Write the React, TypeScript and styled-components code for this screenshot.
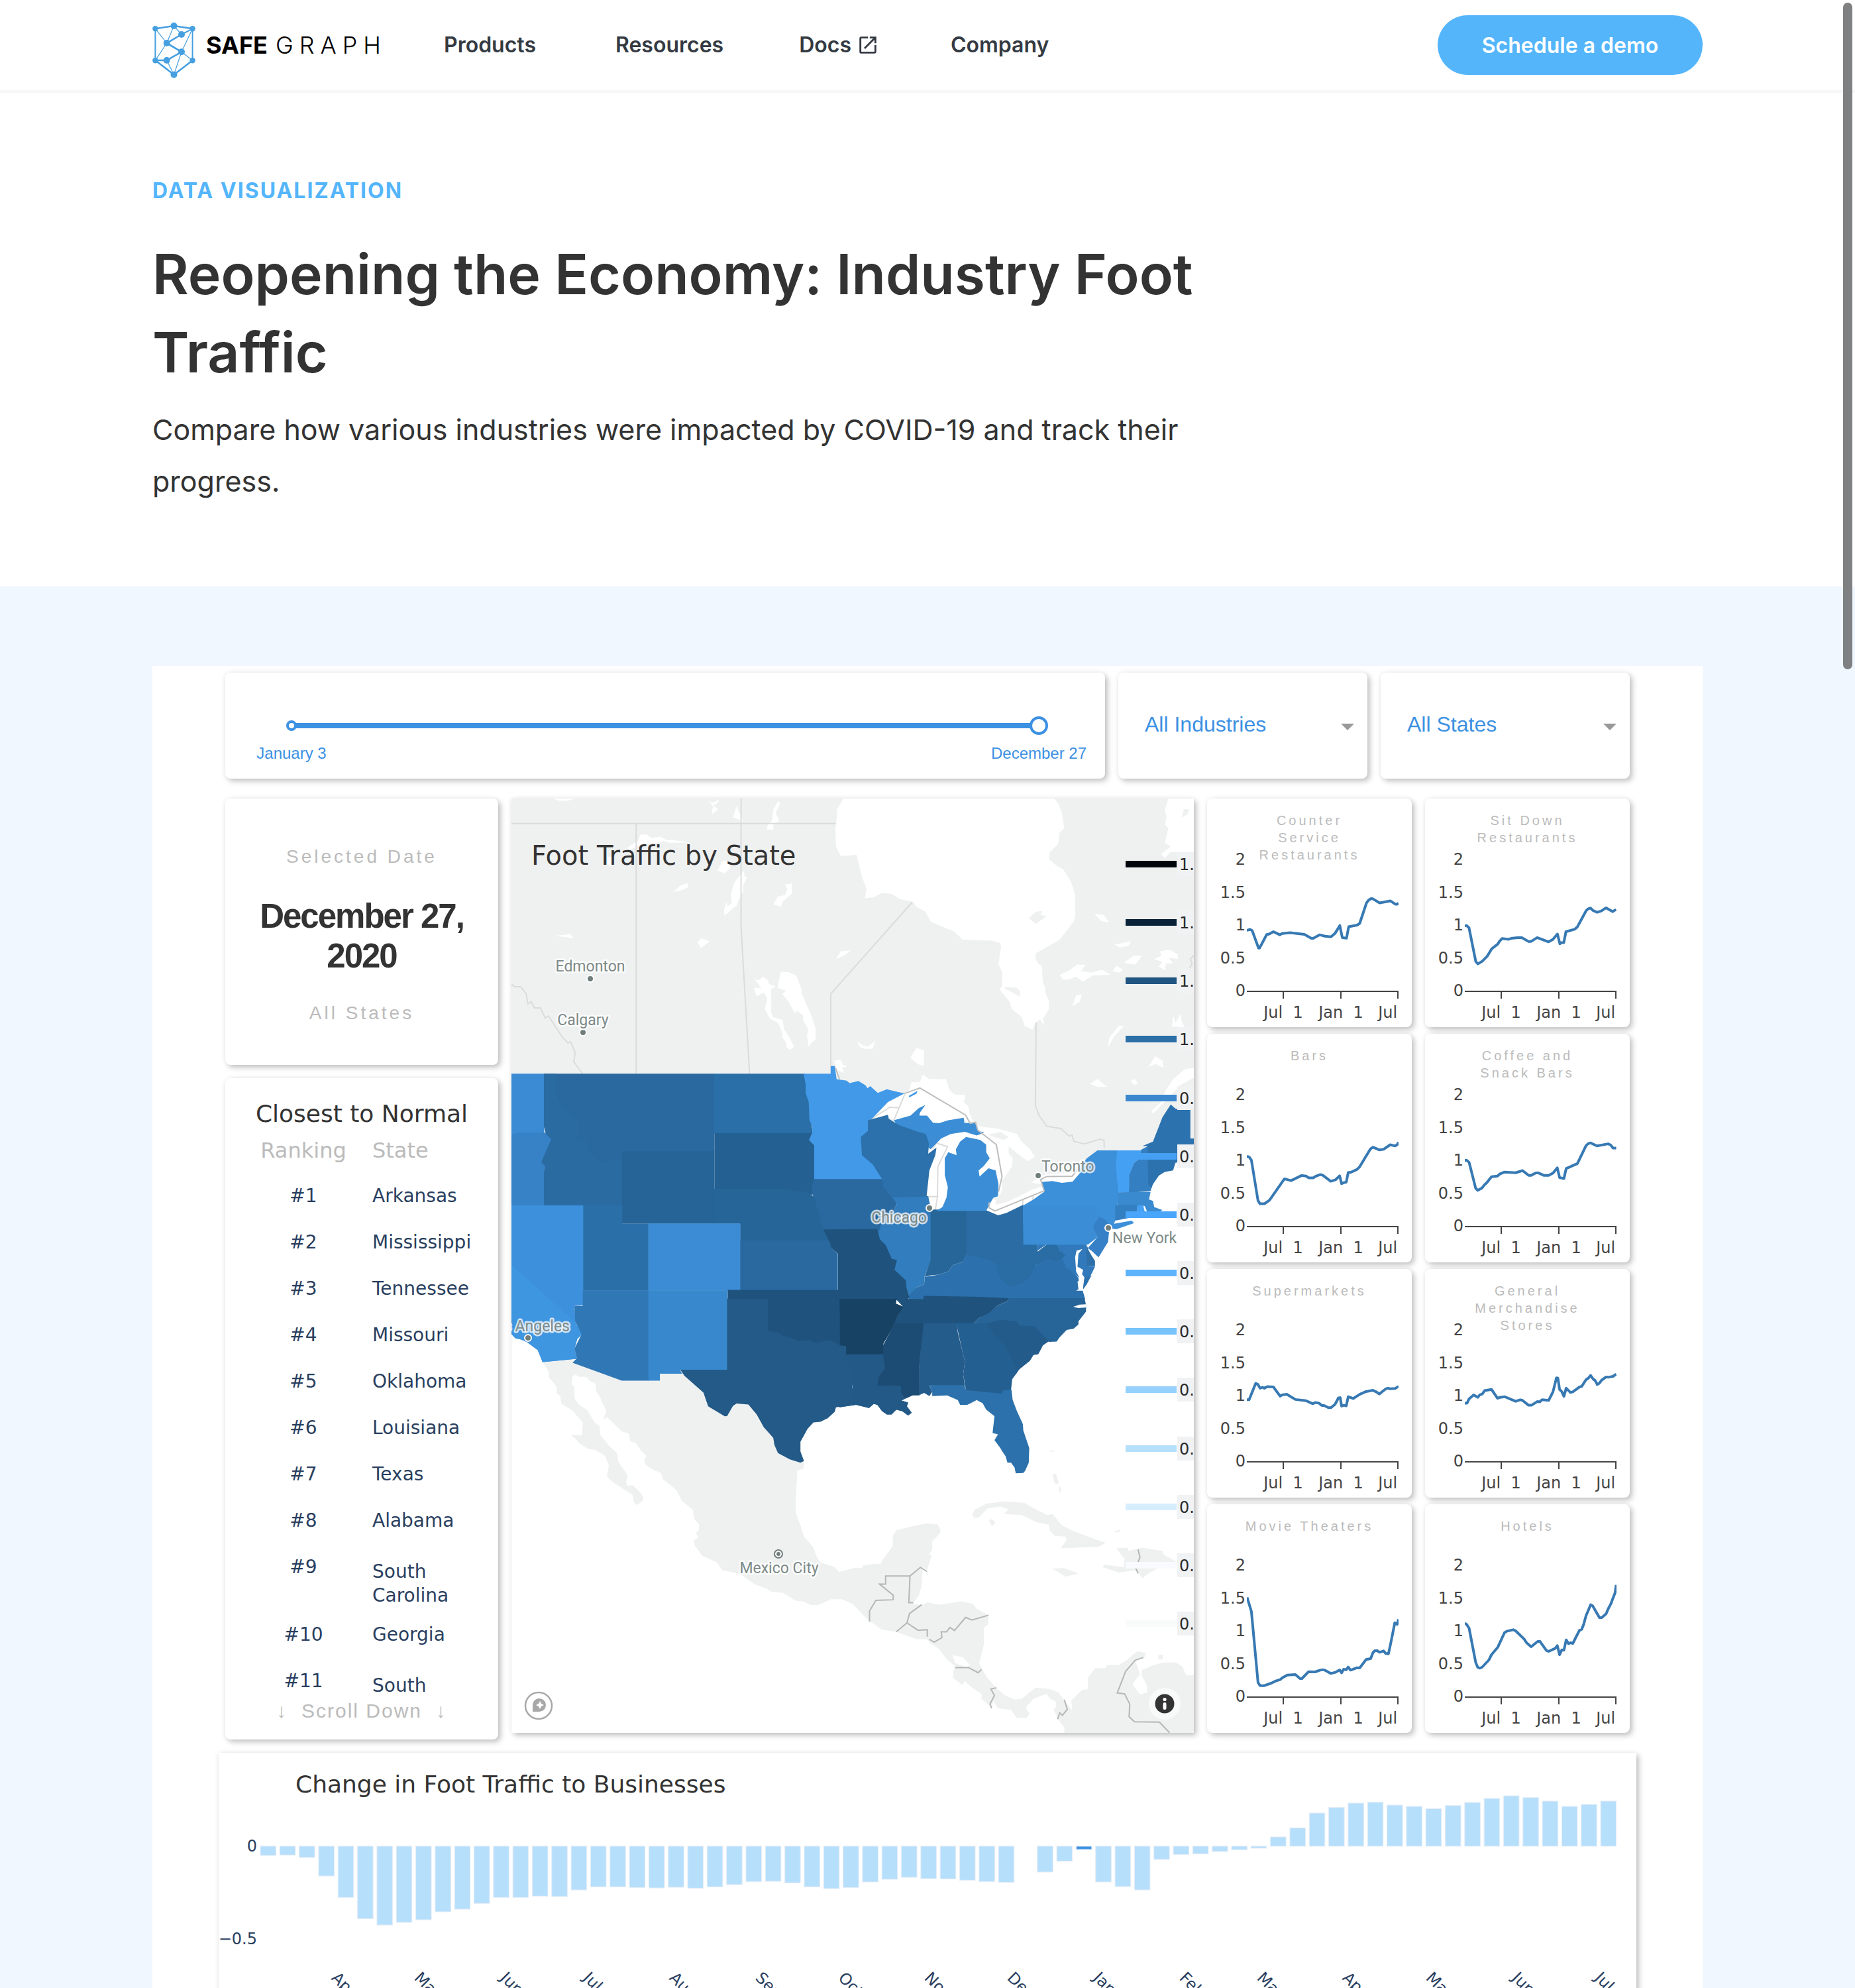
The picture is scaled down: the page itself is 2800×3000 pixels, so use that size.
import React from "react";
import styled, { createGlobalStyle } from "styled-components";
import { MdOpenInNew } from "react-icons/md";

const brand = '"Inter", "Roboto", sans-serif';
const arial = '"Liberation Sans", Arial, sans-serif';
const verdana = 'Verdana, "DejaVu Sans", sans-serif';

const GlobalStyle = createGlobalStyle`
  *, *::before, *::after { box-sizing: border-box; }
  body { margin: 0; background: #fff; color: #333; font-family: ${brand}; }
`;

const Page = styled.div`
  position: relative;
  height: 100vh;
  overflow: hidden;
`;

const ScrollThumb = styled.div`
  position: absolute;
  top: 4px;
  right: 4px;
  width: 14px;
  height: 1006px;
  border-radius: 7px;
  background: #7f8082;
`;

const Container = styled.div`
  max-width: 2340px;
  margin: 0 auto;
`;

/* ---------- header ---------- */

const Header = styled.header`
  border-bottom: 4px solid #f7f7f7;
`;

const HeaderRow = styled(Container)`
  display: flex;
  align-items: center;
  height: 136px;
`;

const Brand = styled.a`
  display: flex;
  align-items: center;
  gap: 16px;
  margin-right: 80px;
  color: #000;
  text-decoration: none;
`;

const Mark = styled.svg`
  width: 65px;
  height: 84px;
  margin-top: 16px;
`;

const Wordmark = styled.span`
  display: flex;
  gap: 12px;
  font-size: 36px;
  font-weight: 300;
  line-height: 44px;
  letter-spacing: 9px;
`;

const WordStrong = styled.b`
  font-weight: 700;
  letter-spacing: 0;
`;

const Nav = styled.nav`
  display: flex;
  flex: 1;
  gap: 108px;
`;

const NavLink = styled.a<{ $menu?: boolean }>`
  display: flex;
  align-items: center;
  gap: 8px;
  padding: 0 ${(p) => (p.$menu ? "6px" : "0")};
  color: #343a42;
  font-size: 32px;
  font-weight: 600;
  line-height: 44px;
  text-decoration: none;
`;

const DemoButton = styled.button`
  width: 400px;
  height: 90px;
  border: 0;
  border-radius: 45px;
  background: #54b5fb;
  color: #fff;
  font-family: inherit;
  font-size: 32px;
  font-weight: 600;
`;

/* ---------- hero ---------- */

const Hero = styled(Container)`
  padding: 128px 0 120px;
`;

const Eyebrow = styled.p`
  margin: 0;
  color: #54b5fb;
  font-size: 32px;
  font-weight: 700;
  line-height: 40px;
  letter-spacing: 2px;
`;

const Title = styled.h1`
  max-width: 1680px;
  margin: 47px 0 0;
  font-size: 84px;
  font-weight: 600;
  line-height: 118px;
`;

const Lead = styled.p`
  max-width: 1640px;
  margin: 18px 0 0;
  font-size: 43px;
  line-height: 78px;
`;

/* ---------- dashboard ---------- */

const Band = styled.section`
  padding-top: 120px;
  background: #f0f7ff;
`;

const Panel = styled(Container)`
  padding: 10px 100px 0;
  background: #fff;
`;

const Inner = styled.div`
  padding: 0 10px;
`;

const Card = styled.section`
  border-radius: 8px;
  background: #fff;
  box-shadow: 4px 4px 8px rgba(0, 0, 0, 0.22), 0 0 8px rgba(0, 0, 0, 0.07);
`;

const Toolbar = styled.div`
  display: grid;
  grid-template-columns: 1328fr 376fr 376fr;
  gap: 20px;
  margin-bottom: 30px;
`;

const SliderCard = styled(Card)`
  height: 160px;
  padding: 66px 86px 0;
`;

const SliderTrack = styled.div`
  position: relative;
  display: flex;
`;

const StartHandle = styled.span`
  position: absolute;
  left: 6px;
  top: 6px;
  width: 16px;
  height: 16px;
  border: 4px solid #3c91e3;
  border-radius: 50%;
  background: #fff;
`;

const Range = styled.input`
  width: 100%;
  height: 28px;
  margin: 0;
  appearance: none;
  background: linear-gradient(#3c91e3, #3c91e3) center / calc(100% - 28px) 8px no-repeat;

  &::-webkit-slider-thumb {
    appearance: none;
    width: 28px;
    height: 28px;
    border: 4px solid #3c91e3;
    border-radius: 50%;
    background: #fff;
  }
`;

const SliderLabels = styled.div`
  display: flex;
  justify-content: space-between;
  margin: 14px -60px 0;
  color: #3c91e3;
  font: 24px/28px ${arial};
`;

const SliderLabel = styled.label`
  width: 148px;
  text-align: center;
`;

const SelectCard = styled(Card)`
  display: flex;
  align-items: center;
  padding: 0 20px 0 40px;
`;

const Select = styled.select`
  flex: 1;
  width: 100%;
  height: 56px;
  margin-bottom: 4px;
  padding: 0;
  border: 0;
  appearance: none;
  background: none;
  color: #3c91e3;
  font: 32px/40px ${arial};
`;

const Caret = styled.span`
  border: 10px solid transparent;
  border-top-color: #999;
  border-bottom: 0;
  margin-top: 4px;
`;

const Board = styled.div`
  display: grid;
  grid-template-columns: minmax(0, 412fr) minmax(0, 1030fr) minmax(0, 638fr);
  gap: 20px;
  align-items: start;
`;

const Side = styled.div`
  display: flex;
  flex-direction: column;
  gap: 20px;
`;

const DateCard = styled(Card)`
  padding: 68px 30px 58px;
  text-align: center;
  font-family: ${arial};
`;

const Muted = styled.p`
  margin: 0;
  color: #bbb;
  font-size: 28px;
  line-height: 40px;
  letter-spacing: 4px;
`;

const BigDate = styled.p`
  margin: 40px 0 36px;
  font-size: 51px;
  font-weight: 700;
  line-height: 60px;
  letter-spacing: -2px;
`;

const RankCard = styled(Card)`
  display: flex;
  flex-direction: column;
  height: 998px;
  padding: 26px 32px 23px;
  font-family: ${verdana};
`;

const RankTitle = styled.h2`
  margin: 0;
  font-size: 36px;
  font-weight: 400;
  line-height: 56px;
  text-align: center;
  white-space: nowrap;
`;

const RankList = styled.div`
  flex: 1;
  min-height: 0;
  overflow: hidden;
`;

const RankTable = styled.table`
  width: 100%;
  table-layout: fixed;
  border-collapse: collapse;
  color: #2a3f5f;
  font-size: 28px;
`;

const HeadCell = styled.th<{ $wide?: boolean }>`
  width: ${(p) => (p.$wide ? "auto" : "172px")};
  padding: 0 0 7px ${(p) => (p.$wide ? "18px" : "0")};
  color: #bbb;
  font-size: 32px;
  font-weight: 400;
  line-height: 54px;
  text-align: ${(p) => (p.$wide ? "left" : "center")};
`;

const RankCell = styled.td`
  padding: 0;
  line-height: 70px;
  text-align: center;
  vertical-align: top;
`;

const StateCell = styled.td<{ $wrap: boolean }>`
  padding: ${(p) => (p.$wrap ? "24px 0 6px 18px" : "0 0 0 18px")};
  line-height: ${(p) => (p.$wrap ? "36px" : "70px")};
`;

const ScrollHint = styled.p`
  margin: 0;
  color: #bbb;
  font: 30px/40px ${arial};
  letter-spacing: 2px;
  text-align: center;
  white-space: nowrap;
`;

const MapCard = styled(Card)`
  border-radius: 0;
`;

const MapSvg = styled.svg`
  display: block;
  width: 100%;
  aspect-ratio: 1030 / 1410;
`;

const MapTitle = styled.text`
  fill: #333;
  font: 40px ${verdana};
`;

const City = styled.text`
  fill: #7d8a88;
  stroke: rgba(255, 255, 255, 0.75);
  stroke-width: 5px;
  stroke-linejoin: round;
  paint-order: stroke;
  font: 23px "Roboto", sans-serif;
`;

const LegendText = styled.text`
  fill: #2a2a2a;
  font: 24px ${verdana};
`;

const MiniGrid = styled.div`
  display: grid;
  grid-template-columns: 1fr 1fr;
  gap: 10px 20px;
`;

const MiniCard = styled(Card)`
  display: grid;
  & > * { grid-area: 1 / 1; }
`;

const MiniTitle = styled.h3`
  margin: 20px 55px 0;
  color: #bbb;
  font: 20px/26px ${arial};
  letter-spacing: 4px;
  text-align: center;
`;

const ChartSvg = styled.svg`
  display: block;
  width: 100%;
  overflow: visible;
`;

const Tick = styled.text<{ $navy?: boolean }>`
  fill: ${(p) => (p.$navy ? "#2a3f5f" : "#444")};
  font: 24px ${verdana};
`;

const BarCard = styled(Card)`
  margin-top: 20px;
  padding-top: 26px;
  border-radius: 0;
`;

const BarTitle = styled.h2`
  margin: 0 0 4px 116px;
  font: 36px/44px ${verdana};
`;

/* ---------- data ---------- */

const nodes: [number, number, number][] = [
  [32.5, 5, 5], [4.4, 9.3, 4.2], [60.6, 9.3, 4.2], [44, 18, 5], [21.7, 31, 5],
  [44, 44.3, 5], [21.7, 57, 5], [4.4, 57.3, 4.2], [60.6, 57.3, 4.2], [32.5, 78.7, 5],
];
const thick = "M4.4 9.3L32.5 5L60.6 9.3M44 18L21.7 31L44 44.3L21.7 57H4.4L32.5 78.7L60.6 57.3";
const medium = "M4.4 9.3V57.3M60.6 9.3V57.3M60.6 9.3L44 18";
const thin = "M4.4 9.3L21.7 31M32.5 5L44 18M32.5 5L21.7 31M21.7 31L4.4 57.3M60.6 9.3L44 44.3L60.6 57.3M44 44.3L32.5 78.7L21.7 57";

const ranking = ["Arkansas", "Mississippi", "Tennessee", "Missouri", "Oklahoma", "Louisiana", "Texas", "Alabama", "South Carolina", "Georgia", "South Dakota"];

type Series = { name: string; x: number; y: number; sx: number; sy: number; line: string };

const series: Series[] = [
  { name: "Counter Service Restaurants", x: 414, y: 1388, sx: 1.8667, sy: 2.8, line: "414,1131 423,1126 429,1131 447,1205 450,1205 470,1148 477,1146 489,1136 507,1149 513,1144 536,1140 576,1147 596,1164 601,1164 619,1149 634,1155 651,1158 663,1142 676,1110 683,1161 695,1163 701,1115 725,1108 732,1101 751,1015 757,1003 764,996 769,997 788,1014 819,1006 833,1020 838,1020 841,1014" },
  { name: "Sit Down Restaurants", x: 1029, y: 1388, sx: 1.8667, sy: 2.8, line: "1029,1110 1035,1111 1041,1120 1060,1262 1066,1272 1078,1261 1092,1240 1105,1208 1122,1188 1127,1176 1134,1165 1153,1168 1160,1164 1178,1161 1190,1161 1208,1177 1216,1177 1233,1161 1265,1179 1277,1169 1290,1146 1297,1187 1301,1182 1308,1182 1314,1136 1338,1126 1346,1116 1371,1047 1377,1039 1383,1036 1390,1046 1402,1054 1414,1048 1427,1035 1446,1051 1455,1042" },
  { name: "Bars", x: 189, y: 655, sx: 2.306, sy: 2.1778, line: "189,424 197,426 205,437 228,570 235,580 250,580 268,568 320,498 343,504 380,487 395,489 405,495 420,495 430,489 445,484 453,486 481,506 498,501 512,488 519,514 528,510 535,509 542,477 550,477 573,467 582,458 619,400 628,394 651,403 665,401 688,386 705,390 712,386 717,378" },
  { name: "Coffee and Snack Bars", x: 948, y: 655, sx: 2.306, sy: 2.1778, line: "948,437 955,437 963,444 986,529 993,536 1008,528 1016,518 1025,510 1041,491 1062,489 1070,482 1085,476 1125,478 1149,471 1171,487 1179,487 1194,479 1203,478 1224,487 1240,487 1255,479 1270,462 1278,494 1293,497 1301,464 1340,448 1370,389 1378,382 1386,380 1408,390 1447,383 1456,387 1464,397 1475,397" },
  { name: "Supermarkets", x: 189, y: 1428, sx: 2.306, sy: 2.1778, line: "189,1224 197,1224 220,1170 228,1174 235,1186 243,1183 250,1186 260,1181 282,1182 290,1193 305,1212 312,1208 328,1206 358,1223 395,1227 419,1237 427,1233 440,1235 450,1243 458,1243 473,1250 482,1250 496,1239 508,1218 514,1217 519,1245 527,1242 535,1244 542,1214 559,1220 582,1206 604,1197 628,1193 643,1200 650,1205 673,1188 680,1186 688,1188 705,1187 717,1180" },
  { name: "General Merchandise Stores", x: 948, y: 1428, sx: 2.306, sy: 2.1778, line: "948,1235 956,1235 963,1221 979,1208 993,1216 1000,1208 1009,1205 1017,1194 1041,1190 1062,1219 1070,1216 1087,1214 1125,1229 1141,1224 1149,1226 1170,1242 1180,1242 1200,1230 1209,1231 1217,1224 1240,1226 1255,1198 1267,1152 1272,1153 1278,1190 1286,1198 1293,1213 1301,1186 1316,1200 1324,1198 1347,1182 1355,1180 1370,1158 1378,1153 1386,1144 1395,1156 1402,1161 1409,1174 1416,1170 1424,1160 1440,1149 1447,1150 1464,1147 1475,1140" },
  { name: "Movie Theaters", x: 189, y: 932, sx: 2.306, sy: 3, line: "190,481 205,545 228,866 235,880 250,880 274,869 290,859 305,853 312,845 330,832 358,830 375,849 381,848 404,817 427,818 442,811 453,808 460,810 481,825 497,820 512,809 519,822 526,806 535,808 542,796 550,810 573,799 582,800 604,762 620,758 628,731 635,722 643,722 651,729 665,723 673,735 682,736 690,688 704,596 712,603 717,580" },
  { name: "Hotels", x: 948, y: 932, sx: 2.306, sy: 3, line: "948,597 955,604 963,620 986,775 993,797 1000,801 1008,797 1032,764 1041,740 1063,706 1086,641 1094,634 1117,627 1125,632 1155,670 1163,686 1179,704 1202,680 1209,679 1232,721 1240,725 1262,712 1270,699 1278,740 1286,718 1293,720 1301,673 1309,690 1316,686 1324,689 1347,630 1355,625 1362,602 1370,564 1386,514 1393,519 1417,573 1425,572 1440,555 1447,533 1456,511 1471,460 1475,424" },
];

/* Weekly change, in pixels below (positive) or above (negative) the zero line, times three. */
const weekly: (number | null)[] = [
  42, 40, 51, 135, 232, 328, 357, 345, 333, 297, 285, 259, 232, 232, 226, 228, 198, 184, 184, 187, 189, 186, 190, 184, 174,
  161, 159, 166, 184, 192, 187, 162, 150, 141, 147, 148, 154, 160, 164, null, 117, 68, 15, 162, 183, 198, 60, 38, 35, 24,
  16, 9, -42, -83, -150, -176, -195, -199, -186, -180, -170, -184, -198, -216, -228, -220, -204, -180, -189, -204,
];
const selectedWeek = 42;

const months: [string, number][] = [
  ["Apr 2020", 169], ["May 2020", 294], ["Jun 2020", 424], ["Jul 2020", 549], ["Aug 2020", 679], ["Sep 2020", 809],
  ["Oct 2020", 934], ["Nov 2020", 1064], ["Dec 2020", 1189], ["Jan 2021", 1319], ["Feb 2021", 1449], ["Mar 2021", 1566],
  ["Apr 2021", 1695], ["May 2021", 1821], ["Jun 2021", 1951], ["Jul 2021", 2076],
];

const legend = ["#01060c", "#0a2238", "#205581", "#2c6ea6", "#3b88cf", "#459ff2", "#4aa6fa", "#5db4fb", "#78c3fc", "#95d1fc", "#b6dffb", "#d6edfd", "#f7fbff", "#f9fafa"];

/* The map is drawn in four quadrants, each with its own grid units. */
const NW = "translate(-12 -15) scale(.357143 .459184)";
const NE = "translate(488 -15) scale(.357143 .459184)";
const SW = "translate(-12 675) scale(.357143 .484694)";
const SE = "translate(488 675) scale(.357143 .484694)";

const WATER = "#fff";
const LAND = "#eff1f1";

type Shape = [string, string];

const waterNW = [
  "1172,602 1205,603 1238,615 1262,665 1258,668 1275,700 1300,745 1320,790 1318,825 1300,835 1290,850 1283,815 1288,790 1268,765 1265,745 1240,730 1232,740 1205,700 1178,675 1195,664 1158,655",
  "1062,628 1080,630 1095,618 1118,630 1122,642 1150,650 1130,660 1132,700 1130,735 1140,752 1180,760 1185,790 1210,820 1228,848 1210,858 1195,850 1195,835 1180,820 1178,800 1160,770 1125,755 1105,725 1115,690 1100,670 1070,683 1058,655 1090,655",
  "500,212 540,185 570,170 578,152 605,150 625,162 665,158 690,170 720,170 790,177 700,178 680,172 650,178 610,180 570,190",
  "440,225 465,222 455,255 440,250",
  "1000,285 1015,270 1020,290 1030,290 1012,320 1012,340 1003,350 985,385 960,400 935,418 932,400 942,372 948,388 965,375 960,350 975,310",
  "905,270 925,238 955,238 958,262 935,278", "720,340 745,320 778,311 778,325 750,335", "820,505 835,492 872,502 850,515 835,524",
  "1140,380 1160,355 1190,350 1200,330 1190,315 1218,312 1218,345 1180,372 1172,388",
  "865,35 880,48 915,35 900,50 885,55 908,68 880,85 885,60", "970,95 985,58 1000,85 1012,110 990,100",
  "1160,42 1170,48 1150,80 1165,105 1140,120 1140,135 1112,135 1118,118 1135,105 1140,70",
  "210,33 305,33 270,40 235,40", "222,484 280,478 298,492 260,488", "1405,560 1425,535 1468,532 1440,548",
  "1493,832 1520,845 1540,848 1568,832 1560,855 1510,852", "1397,895 1425,890 1435,908 1455,912 1430,918 1440,935 1410,925",
];

const waterNE = [
  "37,33 8,70 11,80 3,130 5,190 25,222 92,218 115,290 135,330 127,360 165,357 200,343 242,346 275,363 330,372 345,388 384,405 405,437 505,470 540,496 665,500 700,508 703,520 692,578 708,603 708,648 697,660 740,702 748,724 790,750 803,780 836,792 848,768 868,760 886,778 880,756 905,725 905,700 890,670 888,650 880,640 875,585 860,575 850,560 848,542 950,497 1010,437 1016,420 1016,350 998,305 965,265 940,255 905,232 908,210 945,180 950,145 970,130 960,80 945,50 928,33",
  "1410,33 1395,70 1402,90 1397,120 1410,130 1395,178 1420,190 1380,215 1395,228 1418,208 1518,208 1518,33",
  "1098,412 1135,415 1160,440 1125,435", "1183,513 1252,502 1240,518 1205,522",
  "950,612 990,598 1025,578 1060,580 1040,600 1085,605 1130,595 1165,612 1090,614 1050,635 1020,618 990,628 965,628",
  "1175,600 1190,582 1218,595 1205,605", "1222,572 1265,548 1298,550 1270,578",
  "1350,560 1380,550 1375,535 1415,530 1450,545 1450,560 1410,556 1430,575 1400,575 1395,598 1370,585 1385,570",
  "1005,715 1020,680 1045,676 1035,700", "1155,850 1160,820 1200,780 1222,780 1180,815",
  "1425,785 1430,745 1440,770 1462,740 1466,765 1480,785 1460,810 1445,780", "1325,915 1355,880 1385,895 1390,918 1355,905",
  "1078,970 1110,955 1150,980 1110,980", "1250,960 1270,955 1280,968 1265,975",
  "320,885 345,852 378,860 375,912 350,905", "95,830 120,845 140,848 172,830 160,855 125,855",
  "1518,918 1480,922 1430,955 1400,990 1380,1030 1338,1060 1345,1068 1400,1025 1460,975 1518,950",
  "160,1083 225,1030 295,1002 315,990 325,965 360,965 372,940 400,955 470,955 485,990 505,1005 553,1008 545,1030 565,1045 570,1068 585,1095 570,1105 545,1085 480,1095 440,1105 415,1100 390,1080 358,1078 320,1080 270,1092 225,1078",
  "450,1145 490,1130 560,1125 570,1150 530,1165 515,1205 480,1200 470,1215 470,1270 482,1310 476,1345 455,1380 430,1388 405,1388 385,1350 385,1310 395,1260 410,1215 383,1217 400,1180 425,1160",
  "575,1135 620,1140 600,1110 690,1118 770,1135 790,1160 825,1185 845,1210 815,1225 765,1195 735,1175 735,1200 752,1215 750,1240 720,1275 705,1290 708,1320 690,1345 665,1340 612,1285 600,1240 630,1190 555,1150",
  "636,1387 655,1350 680,1350 680,1368 730,1358 780,1340 830,1320 885,1305 890,1325 840,1360 780,1380 725,1405 665,1395",
  "830,1295 870,1275 890,1268 1010,1262 1035,1240 1040,1268 1005,1300 875,1300",
  "1518,1195 1440,1225 1340,1290 1325,1340 1170,1420 1140,1460 1120,1600 1568,1600 1568,1195",
];

const islandsNE = ["715,655 730,652 765,654 780,662 784,684", "820,425 850,405 878,402 870,415 895,420 850,445", "645,1138 700,1128 735,1145 715,1155", "1468,95 1475,68 1500,68 1490,85"];

const statesNW: Shape[] = [
  ["#3a8ad4", "30,937 172,937 172,1137 30,1137"],
  ["#3782c6", "30,1137 60,1131 185,1131 204,1150 164,1230 180,1243 173,1372 30,1372"],
  ["#29699f", "171,937 892,937 892,1192 502,1192 502,1372 171,1370 171,1262 178,1243 160,1228 202,1152 180,1135 171,1110"],
  ["#2a6ba2", "171,937 220,937 220,1000 245,1040 318,1095 310,1160 340,1150 370,1200 400,1228 480,1215 501,1220 501,1370 171,1370 171,1262 178,1243 160,1228 202,1152 180,1135 171,1110"],
  ["#2b6fa8", "890,937 1275,937 1284,1000 1295,1030 1300,1090 1307,1134 890,1134"],
  ["#256092", "892,1132 1305,1132 1293,1155 1316,1172 1316,1283 1305,1335 1240,1330 892,1316"],
  ["#266397", "501,1191 892,1191 892,1430 501,1430"],
  ["#266598", "890,1315 1205,1315 1225,1325 1240,1320 1280,1325 1315,1342 1340,1400 1350,1440 1385,1487 1000,1487 1000,1430 890,1430"],
  ["#2b6fa9", "336,1370 502,1370 502,1430 613,1430 613,1650 336,1650"],
  ["#3b8cd5", "612,1429 1001,1429 1001,1650 612,1650"],
  ["#2969a0", "1000,1485 1378,1485 1395,1500 1388,1510 1413,1530 1413,1650 1000,1650"],
];

const statesNE: Shape[] = [
  ["#4299e8", "-132,937 -17,937 -17,912 0,912 8,955 50,960 63,968 100,961 130,975 138,985 150,978 182,1000 220,988 260,996 295,1002 225,1030 160,1083 140,1095 145,1125 115,1145 120,1205 165,1235 205,1285 -87,1285 -87,1172 -109,1155 -95,1132 -95,1110 -107,1090 -110,1030 -123,1000 -123,970"],
  ["#2969a0", "-87,1283 202,1283 210,1310 245,1345 262,1365 240,1400 198,1420 190,1452 -48,1452 -65,1400 -90,1340 -97,1330 -95,1300"],
  ["#3b8ed6", "250,1090 320,1075 355,1050 383,1040 360,1065 358,1075 390,1075 415,1098 440,1100 480,1090 545,1082 548,1100 595,1097 605,1125 632,1130 600,1140 550,1128 490,1135 450,1150 405,1185 380,1170 340,1140 270,1115"],
  ["#4299e8", "313,1010 350,993 345,1003 315,1015"],
  ["#2c71ab", "140,1090 225,1072 228,1085 270,1105 340,1125 385,1135 398,1165 395,1200 430,1180 425,1205 400,1255 388,1341 240,1343 205,1310 200,1283 160,1235 115,1205 110,1145 140,1125"],
  ["#3b8ed6", "515,1205 512,1185 530,1160 555,1145 615,1155 640,1170 640,1195 655,1215 630,1240 608,1255 612,1275 650,1248 680,1255 692,1300 690,1340 670,1345 655,1365 640,1388 430,1388 455,1375 472,1345 478,1310 465,1270 465,1215 480,1195"],
  ["#3c90d9", "1110,1189 1197,1189 1195,1240 1200,1327 1195,1365 1188,1415 1180,1430 1255,1420 1265,1428 1190,1448 1160,1445 1115,1408 1090,1374 797,1374 797,1370 840,1350 885,1325 875,1293 920,1290 960,1296 1005,1292 1035,1265 1035,1245 1065,1215"],
  ["#3b8ed6", "795,1370 1095,1370 1115,1405 1095,1440 1110,1475 1070,1499 797,1499"],
  ["#3580c6", "1115,1405 1150,1420 1160,1450 1155,1490 1115,1540 1070,1510 1110,1475 1092,1440"],
  ["#44a0f2", "1193,1189 1299,1189 1290,1215 1265,1230 1247,1270 1243,1327 1198,1327 1188,1240"],
  ["#347fc1", "1295,1187 1324,1175 1327,1290 1342,1300 1335,1322 1243,1329 1245,1270 1265,1230 1290,1215"],
  ["#2c72ae", "1300,1175 1345,1160 1370,1110 1385,1080 1420,1038 1440,1052 1503,1055 1503,1150 1518,1150 1518,1215 1440,1230 1430,1255 1395,1260 1370,1272 1345,1300 1338,1315 1325,1300 1322,1175"],
  ["#3a8ad0", "1197,1327 1335,1325 1328,1350 1345,1355 1350,1375 1385,1385 1370,1392 1320,1390 1310,1372 1280,1370 1195,1370"],
  ["#347fc1", "1186,1368 1280,1368 1278,1395 1240,1412 1185,1420"],
  ["#459ff2", "1278,1370 1303,1368 1310,1390 1278,1397"],
];

const landSW = [
  "160,355 292,350 505,415 661,390 755,393 1000,450 1160,590 1255,660 1272,675 1268,695 1242,700 1235,800 1235,830 1255,870 1270,905 1310,940 1325,970 1340,985 1400,1000 1418,1015 1480,1003 1510,1003 1540,993 1600,990 1600,1150 1560,1175 1545,1167 1475,1115 1430,1100 1385,1100 1330,1119 1300,1119 1265,1107 1235,1105 1180,1080 1130,1077 1115,1068 1060,1053 1000,1022 925,1010 900,985 840,965 810,935 803,918 825,908 813,895 825,885 827,868 805,850 800,822 755,795 730,760 675,728 665,708 620,692 598,680 595,665 605,655 580,637 560,615 535,608 530,585 500,578 440,535 422,540 435,515 405,468 390,450 390,430 362,420 350,408 320,408 302,400 290,410 288,430 300,440 300,475 320,495 355,512 385,550 405,560 410,590 450,625 480,645 485,672 525,715 518,735 525,748 545,745 575,765 590,780 590,792 565,807 552,800 545,775 460,735 437,718 445,685 430,655 390,636 360,633 320,615 310,605 283,588 332,590 335,550 290,512 245,492 240,468 225,460 225,440 210,425 192,410 192,395",
];

const landSE = [
  "120,1150 145,1167 200,1195 260,1202 345,1225 390,1225 400,1235 440,1255 470,1285 510,1310 500,1325 500,1345 540,1368 548,1355 580,1375 620,1395 620,1410 650,1430 665,1435 670,1418 690,1440 745,1445 770,1470 810,1470 825,1455 810,1445 810,1435 840,1410 895,1395 910,1410 935,1420 935,1435 925,1445 945,1475 970,1500 970,1520 1520,1520 1518,1337 1485,1337 1470,1310 1440,1297 1390,1297 1350,1305 1300,1320 1295,1335 1320,1370 1320,1390 1290,1397 1262,1370 1262,1360 1290,1335 1270,1290 1310,1280 1315,1268 1280,1262 1255,1275 1235,1290 1200,1305 1150,1305 1145,1315 1100,1315 1070,1345 1070,1380 1045,1383 1000,1415 1003,1445 970,1415 945,1390 910,1380 850,1375 790,1410 760,1413 720,1400 680,1375 640,1340 610,1300 625,1260 630,1240 630,1190 648,1178 650,1150 600,1130 585,1115 540,1107 440,1117 390,1110 370,1120 330,1113 355,1090 367,1060 372,1000 390,1010 410,965 400,960 412,945 412,920 445,895 447,885 435,867 385,864 260,885 245,905 245,935 195,985 200,995 170,990 120,995",
  "562,852 600,848 580,840 590,822 640,803 710,796 800,800 860,825 900,838 920,835 960,870 1010,888 1070,905 1145,925 1115,937 955,942 980,915 975,905 930,903 908,885 905,868 850,860 790,838 715,835 735,820 700,812 645,818 610,845",
  "652,855 665,850 680,862 665,872",
  "1190,942 1240,940 1240,950 1300,940 1385,950 1390,962 1450,985 1400,990 1330,1018 1300,1035 1275,1010 1200,1017 1130,1000 1140,993 1220,1000 1225,975",
  "918,1005 970,1003 1030,1020 975,1030", "920,712 935,710 948,740 930,742", "948,748 958,755 955,770 948,765",
  "900,638 940,637 915,642", "1178,890 1210,882 1200,892", "1368,1275 1388,1272 1385,1288 1368,1288",
];

const statesSW: Shape[] = [
  ["#3d91dc", "30,-126 337,-126 337,185 300,187 305,240 332,275 312,290 300,320 310,352 165,362 145,325 100,300 75,292 50,288 30,272"],
  ["#3e95e0", "30,57 285,225 305,240 332,275 312,290 300,320 310,352 165,362 145,325 100,300 75,292 50,288 30,272"],
  ["#3077b6", "335,139 614,139 614,420 500,420 292,364 310,350 300,320 330,275 303,235 300,187 335,187"],
  ["#3888cd", "612,139 948,139 948,388 747,388 755,398 661,398 661,420 612,420"],
  ["#235a88", "945,164 1447,164 1449,340 1472,400 1475,495 1405,503 1400,517 1370,537 1340,548 1310,550 1285,570 1255,610 1255,640 1270,670 1255,675 1210,665 1160,645 1145,620 1140,598 1100,565 1070,525 1035,494 985,491 970,498 945,530 935,531 865,500 845,457 765,405 747,386 945,386"],
  ["#1f537e", "948,137 1417,137 1422,310 1380,293 1320,302 1290,293 1240,297 1230,290 1180,280 1160,270 1117,265 1117,165 948,165"],
];

const statesSE: Shape[] = [
  ["#327dbd", "230,-155 395,-155 407,-112 407,45 380,95 378,120 345,130 315,160 303,130 250,80 235,40 185,-20 180,-50 195,-80 240,-99 262,-130"],
  ["#276699", "405,-113 558,-113 558,28 540,50 500,60 480,80 440,90 405,92 380,97 405,45"],
  ["#2a6ca3", "556,-112 640,-111 690,-95 725,-102 797,-128 799,-4 790,35 740,60 690,62 650,48 600,42 556,30"],
  ["#2c71ad", "313,168 313,155 345,130 378,120 380,97 440,90 480,80 500,60 540,50 556,26 650,43 690,60 740,110 790,112 850,60 900,30 950,18 985,65 1030,100 1035,135 1048,140 1058,165 620,168"],
  ["#3179ba", "855,-6 1062,-6 1067,62 1100,65 1080,95 1050,125 1047,95 1030,98 975,65 950,15 905,-10 858,15"],
  ["#2c6fa9", "1062,-6 1075,15 1100,45 1100,64 1065,62"],
  ["#2c71ad", "1062,98 1085,92 1065,120 1050,135 1050,112"],
  ["#2a6ca4", "690,60 740,50 790,30 797,-6 855,-6 858,18 905,-10 940,0 950,15 975,30 940,50 900,40 850,60 820,100 790,118 740,128 705,105 685,75"],
  ["#1f537d", "-48,-51 180,-52 190,-20 215,-2 240,40 262,45 252,75 300,108 303,130 315,160 290,190 262,168 14,168 14,25 -15,5 -20,-10"],
  ["#174264", "20,165 262,165 258,180 290,190 268,215 240,260 205,305 210,340 48,340 48,312 22,310"],
  ["#1f537e", "286,192 300,165 375,166 375,156 620,159 734,163 732,172 690,185 650,212 610,225 585,242 250,242 268,215"],
  ["#276599", "732,163 1056,163 1062,185 1062,205 1030,235 1030,245 1010,258 980,262 950,285 938,298 905,299 845,252 780,250 640,242 585,241 610,225 650,210 690,185 732,172"],
  ["#245f91", "513,241 645,241 720,250 760,300 775,375 775,388 765,400 750,415 745,450 712,452 705,464 555,452 543,400 550,360 540,330"],
  ["#235b8b", "640,243 700,230 770,235 780,248 845,250 905,297 880,310 860,338 840,340 825,358 780,385 765,400 770,383 745,350 720,310 680,280"],
  ["#245c8c", "373,241 515,241 520,270 540,330 550,360 543,400 550,437 400,435 412,455 400,468 378,458 356,465 357,370"],
  ["#225987", "48,338 208,338 212,380 185,410 182,435 282,437 280,460 300,475 282,482 310,488 305,500 325,520 310,528 285,515 260,510 240,525 220,525 200,515 180,495 165,492 145,505 90,495 20,503 20,495 60,490 75,440 68,400 48,345"],
  ["#1c4c74", "252,241 375,241 357,370 357,465 330,465 300,475 280,460 280,437 180,435 185,410 212,380 205,340 205,310 240,260"],
  ["#2c71ab", "400,434 548,434 555,449 705,460 712,449 747,448 752,480 770,515 795,555 797,575 822,630 820,675 805,700 797,707 765,708 760,690 745,675 730,675 722,655 708,640 700,630 675,605 690,587 667,583 675,530 640,510 625,490 600,480 580,488 560,495 530,495 520,480 475,466 412,468 412,455"],
];

const waterSE = [
  "1016,35 1022,15 1047,10 1030,25 1026,65 1050,75 1045,88 1055,98 1048,140 1020,140 1030,135 1026,112 1038,105 1020,80",
  "1070,10 1085,15 1112,35 1103,50 1085,30", "1008,190 1035,183 1062,182 1062,192 1030,194", "497,1275 540,1280 572,1305 560,1312 510,1300",
];

type CityPin = { name: string; x: number; y: number; tx: number; ty: number; anchor: "start" | "middle" | "end" };
const cities: CityPin[] = [
  { name: "Edmonton", x: 119, y: 272, tx: 119, ty: 261, anchor: "middle" },
  { name: "Calgary", x: 108, y: 353, tx: 108, ty: 342, anchor: "middle" },
  { name: "Los Angeles", x: 25, y: 814, tx: 88, ty: 804, anchor: "end" },
  { name: "Chicago", x: 631, y: 618, tx: 627, ty: 640, anchor: "end" },
  { name: "Toronto", x: 795, y: 569, tx: 800, ty: 563, anchor: "start" },
  { name: "New York", x: 901, y: 648, tx: 907, ty: 671, anchor: "start" },
];

/* ---------- pieces ---------- */

const Polys = ({ at, fill, list }: { at: string; fill: string; list: string[] }) => (
  <g transform={at} fill={fill}>
    {list.map((p) => <polygon key={p} points={p} />)}
  </g>
);

const States = ({ at, list }: { at: string; list: Shape[] }) => (
  <g transform={at}>
    {list.map(([fill, p]) => <polygon key={p} points={p} fill={fill} />)}
  </g>
);

const Lines = ({ at, color, d }: { at: string; color: string; d: string }) => (
  <g transform={at} fill="none" stroke={color} strokeWidth={2}>
    <path d={d} vectorEffect="non-scaling-stroke" />
  </g>
);

function TrafficMap() {
  return (
    <MapSvg viewBox="0 0 1030 1410" role="img" aria-label="Foot traffic by state">
      <rect width="1030" height="650" fill={LAND} />
      <Polys at={NW} fill={WATER} list={waterNW} />
      <Polys at={NE} fill={WATER} list={waterNE} />
      <Polys at={NE} fill={LAND} list={islandsNE} />
      <Polys at={SW} fill={LAND} list={landSW} />
      <Polys at={SE} fill={LAND} list={landSE} />
      <Lines at={NW} color="#dadcdc" d="M34,115H1405M561,115V937M1004,33V455L1040,937M1383,937V675L1728,373M34,643L46,651 72,651 96,675 103,708 117,700 131,721 156,721 176,754 190,747 248,816 272,836 284,832 303,868 297,898 334,937" />
      <Lines at={NE} color="#dadcdc" d="M851,770L848,1042 864,1075 896,1110 955,1117 992,1143 1003,1138 1010,1159 1056,1168 1121,1152 1138,1156 1139,1180M1518,548L1503,560 1510,575 1500,590M160,1083L233,1047 270,1049M250,1090L297,1002M412,1185L430,1165 477,1177 436,1242 434,1342 425,1385M395,1341H438M795,1350V1372M838,1335V1352" />
      <States at={NW} list={statesNW} />
      <States at={SE} list={statesSE} />
      <States at={NE} list={statesNE} />
      <States at={SW} list={statesSW} />
      <States at={SE} list={statesSE.slice(8, 10).concat(statesSE.slice(15, 17))} />
      <Polys at={SE} fill={WATER} list={waterSE} />
      <Lines at={NE} color="#bdbdbd" d="M3,918L20,955M295,1002L360,984 553,1073 572,1100 595,1097 605,1123 683,1170 707,1275 692,1325M652,1360V1378L677,1388 885,1322 870,1285 895,1275 1003,1274 1040,1240" />
      <Lines at={SE} color="#b4b7b6" d="M147,1170V1137L174,1104 247,1102V1088L189,1053H215V1028H318L362,1001 390,1014M318,1028L313,1111H332M260,1202L305,1174 316,1145 368,1117M305,1174L352,1197 391,1195V1217M400,1225L420,1234 453,1220 450,1202H472L487,1188 506,1198 553,1157 580,1165 650,1150M508,1313H565L606,1329 620,1319M683,1376L660,1380 675,1400 656,1427 663,1440M970,1413L983,1443 962,1462 951,1454 942,1474M1304,1282L1270,1290 1230,1324 1194,1392 1225,1395 1247,1427 1244,1466 1267,1482 1372,1483 1415,1516M1282,945L1290,970 1272,1003 1282,1020" />
      {cities.map((c) => (
        <g key={c.name}>
          <circle cx={c.x} cy={c.y} r="5" fill="#6f7d7b" stroke="#fff" strokeWidth="2" />
          <City x={c.tx} y={c.ty} textAnchor={c.anchor}>{c.name}</City>
        </g>
      ))}
      <circle cx="403" cy="1140" r="6" fill="#fff" stroke="#6f7d7b" strokeWidth="2" />
      <circle cx="403" cy="1140" r="3" fill="#6f7d7b" />
      <City x="404" y="1169" textAnchor="middle">Mexico City</City>
      {legend.map((color, i) => {
        const y = 99 + Math.round(i * 88.15);
        return (
          <g key={color}>
            <rect x="927" y={y - 5} width="77" height="10" fill={color} />
            <rect x="1005" y={y - 18} width="25" height="36" fill="#f1f2f4" />
            <LegendText x="1008" y={y + 9}>{i < 4 ? "1." : "0."}</LegendText>
          </g>
        );
      })}
      <MapTitle x="30" y="100">Foot Traffic by State</MapTitle>
      <circle cx="41" cy="1369" r="20" fill="#fff" stroke="#a8a8a8" strokeWidth="2.5" />
      <path d="M32 1378V1369a10 10 0 1 1 10 9Z" fill="#a8a8a8" />
      <path d="M43 1362l2 4 4 2-4 2-2 4-2-4-4-2 4-2Z" fill="#fff" />
      <circle cx="986" cy="1366" r="24" fill="#f8f9f9" />
      <circle cx="986" cy="1366" r="14.5" fill="#333" />
      <circle cx="986" cy="1359.5" r="2.6" fill="#fff" />
      <rect x="983.5" y="1364" width="5" height="11" rx="2.5" fill="#fff" />
    </MapSvg>
  );
}

function MiniChart({ s }: { s: Series }) {
  const clip = "plot-" + s.name.replace(/ /g, "-");
  return (
    <MiniCard>
      <ChartSvg viewBox="0 0 309 345" role="img" aria-label={s.name + " foot traffic"}>
        <clipPath id={clip}><rect x="60" y="60" width="229" height="285" /></clipPath>
        {["2", "1.5", "1", "0.5", "0"].map((t, i) => (
          <Tick key={t} x="58" y={100 + Math.round(i * 49.6)} textAnchor="end">{t}</Tick>
        ))}
        <g clipPath={`url(#${clip})`}>
          <path d="M60 291H289M115 291V302M202 291V302M288 291V302" stroke="#444" strokeWidth="2" fill="none" />
          <Tick x="115" y="331" textAnchor="middle">{"Jul\u00a0\u00a01"}</Tick>
          <Tick x="202" y="331" textAnchor="middle">{"Jan\u00a0\u00a01"}</Tick>
          <Tick x="288" y="331" textAnchor="middle">{"Jul\u00a0\u00a01"}</Tick>
          <g transform={`translate(60 291) scale(${1 / s.sx} ${1 / s.sy}) translate(${-s.x} ${-s.y})`}>
            <polyline points={s.line} fill="none" stroke="#3779b3" strokeWidth="4" strokeLinejoin="round" vectorEffect="non-scaling-stroke" />
          </g>
        </g>
      </ChartSvg>
      <MiniTitle>{s.name}</MiniTitle>
    </MiniCard>
  );
}

function BarChart() {
  return (
    <ChartSvg viewBox="0 0 2140 400" role="img" aria-label="Weekly change in foot traffic">
      <Tick $navy x="58" y="75" textAnchor="end">0</Tick>
      <Tick $navy x="58" y="215" textAnchor="end">−0.5</Tick>
      {weekly.map((v, i) => v === null ? null : (
        <rect key={i} x={63 + i * 29.32} width="23.5" y={67 + Math.min(0, v / 3)} height={Math.abs(v / 3)}
          fill={i === selectedWeek ? "#3c91e3" : "#b6dffc"} stroke="#e5ecf6" strokeWidth="1" />
      ))}
      {months.map(([m, x]) => (
        <Tick $navy key={m} transform={`translate(${x} 267) rotate(45)`}>{m}</Tick>
      ))}
    </ChartSvg>
  );
}

export default function App() {
  return (
    <Page>
      <GlobalStyle />
      <Header>
        <HeaderRow>
          <Brand href="#">
            <Mark viewBox="0 0 65 84" aria-hidden="true">
              <g fill="none" stroke="#459fe0">
                <path d={thick} strokeWidth="2.6" />
                <path d={medium} strokeWidth="2" />
                <path d={thin} strokeWidth="1.2" />
              </g>
              {nodes.map(([x, y, r], i) => <circle key={i} cx={x} cy={y} r={r} fill="#459fe0" />)}
            </Mark>
            <Wordmark><WordStrong>SAFE</WordStrong>GRAPH</Wordmark>
          </Brand>
          <Nav>
            <NavLink href="#" $menu>Products</NavLink>
            <NavLink href="#" $menu>Resources</NavLink>
            <NavLink href="#">Docs <MdOpenInNew size={34} /></NavLink>
            <NavLink href="#">Company</NavLink>
          </Nav>
          <DemoButton type="button">Schedule a demo</DemoButton>
        </HeaderRow>
      </Header>

      <Hero>
        <Eyebrow>DATA VISUALIZATION</Eyebrow>
        <Title>Reopening the Economy: Industry Foot Traffic</Title>
        <Lead>Compare how various industries were impacted by COVID-19 and track their progress.</Lead>
      </Hero>

      <Band>
        <Panel>
          <Inner>
            <Toolbar>
              <SliderCard>
                <SliderTrack>
                  <Range id="week" type="range" min={0} max={51} defaultValue={51} />
                  <StartHandle />
                </SliderTrack>
                <SliderLabels>
                  <SliderLabel as="span">January 3</SliderLabel>
                  <SliderLabel htmlFor="week">December 27</SliderLabel>
                </SliderLabels>
              </SliderCard>
              <SelectCard>
                <Select aria-label="Industry"><option>All Industries</option></Select>
                <Caret />
              </SelectCard>
              <SelectCard>
                <Select aria-label="State"><option>All States</option></Select>
                <Caret />
              </SelectCard>
            </Toolbar>

            <Board>
              <Side>
                <DateCard>
                  <Muted>Selected Date</Muted>
                  <BigDate>December 27, 2020</BigDate>
                  <Muted>All States</Muted>
                </DateCard>
                <RankCard>
                  <RankTitle>Closest to Normal</RankTitle>
                  <RankList>
                    <RankTable>
                      <thead>
                        <tr><HeadCell>Ranking</HeadCell><HeadCell $wide>State</HeadCell></tr>
                      </thead>
                      <tbody>
                        {ranking.map((name, i) => (
                          <tr key={name}>
                            <RankCell>#{i + 1}</RankCell>
                            <StateCell $wrap={name.includes(" ")}>{name}</StateCell>
                          </tr>
                        ))}
                      </tbody>
                    </RankTable>
                  </RankList>
                  <ScrollHint>↓&nbsp; Scroll Down &nbsp;↓</ScrollHint>
                </RankCard>
              </Side>
              <MapCard><TrafficMap /></MapCard>
              <MiniGrid>
                {series.map((s) => <MiniChart key={s.name} s={s} />)}
              </MiniGrid>
            </Board>
          </Inner>

          <BarCard>
            <BarTitle>Change in Foot Traffic to Businesses</BarTitle>
            <BarChart />
          </BarCard>
        </Panel>
      </Band>
      <ScrollThumb />
    </Page>
  );
}
